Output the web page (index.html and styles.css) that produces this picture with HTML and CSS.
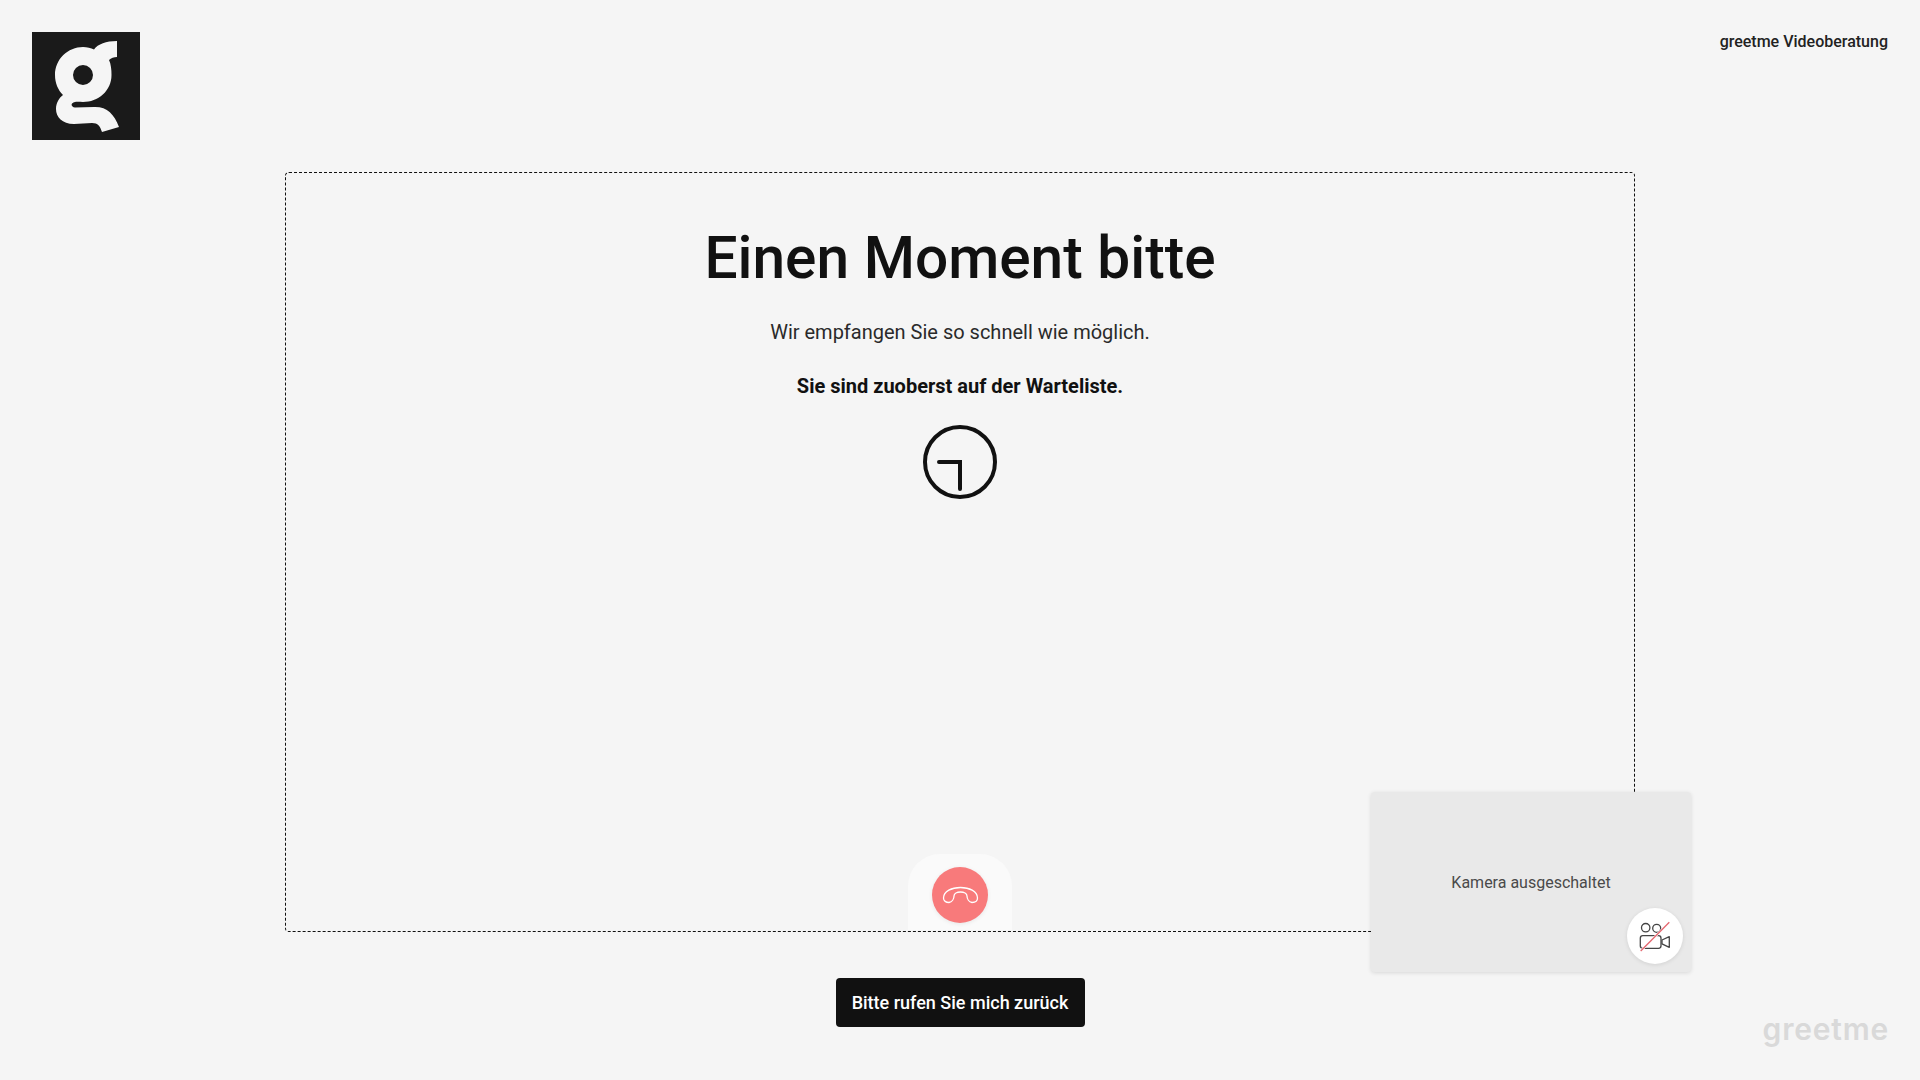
FILE: index.html
```html
<!DOCTYPE html>
<html lang="de">
<head>
	<meta charset="UTF-8">
	<meta name="viewport" content="width=device-width, initial-scale=1.0">
	<title>greetme Videoberatung</title>
	<link rel="stylesheet" href="styles.css">
</head>
<body>
	<header class="top">
		<svg class="logo" viewBox="0 0 108 108">
			<rect width="108" height="108" fill="#1a1a1a"/>
			<path fill="#f5f5f5" fill-rule="evenodd" d="M85 9V25C82 25 79 26 77 28C79 32 79.500 38 79.500 43C79.500 59 66 70 51 70C48 70 45 69.500 43 70C38 71 39 75 43 75.500L62 75C75 74.500 82 82 87 95L70 100C68 94 66 91 60 91L42 92C30 92 24 85 24 77C24 71 27 66 31 63C26 58 23 51 23 43C23 27 36 15 51 15C55 15 59 16 62 17.500C66 12 74 9 85 9ZM51 33A10 10 0 1 0 51 53A10 10 0 1 0 51 33Z"/>
		</svg>
		<span class="top-title">greetme Videoberatung</span>
	</header>

	<main class="stage">
		<h1>Einen Moment bitte</h1>
		<p class="lead">Wir empfangen Sie so schnell wie möglich.</p>
		<p class="queue">Sie sind zuoberst auf der Warteliste.</p>
		<svg class="clock" viewBox="0 0 74 74">
			<circle cx="37" cy="37" r="35" fill="none" stroke="#111" stroke-width="4"/>
			<path d="M16 37H37V64" fill="none" stroke="#111" stroke-width="4" stroke-linecap="round" stroke-linejoin="miter"/>
		</svg>

		<div class="hangup">
			<button class="hangup-btn" type="button" aria-label="Auflegen">
				<svg viewBox="0 0 37 18" width="37" height="18">
					<path d="M1.500 12C1.500 5 10 1.500 18.500 1.500C27 1.500 35.500 5 35.500 12C35.500 15 33 16.500 30 16.500C27 16 25 13 25 10C25 7.500 22 6 18.500 6C15 6 12 7.500 12 10C12 13 10 16 7 16.500C4 16.500 1.500 15 1.500 12Z" fill="none" stroke="#fff" stroke-width="1.300"/>
				</svg>
			</button>
		</div>
	</main>

	<div class="callback">
		<button class="callback-btn" type="button">Bitte rufen Sie mich zurück</button>
	</div>

	<aside class="selfview">
		<span class="selfview-text">Kamera ausgeschaltet</span>
		<button class="cam-btn" type="button" aria-label="Kamera">
			<svg viewBox="0 0 56 56" width="56" height="56">
				<g fill="none" stroke="#444" stroke-width="1.300" stroke-linejoin="round">
					<circle cx="18.700" cy="19.700" r="4.200"/>
					<circle cx="29.700" cy="20.300" r="4"/>
					<rect x="13.300" y="27.700" width="20.700" height="12.600" rx="2.500"/>
					<path d="M35 32L42.300 28.700V39.300L35 35.800Z"/>
				</g>
				<path d="M13.700 43L42.300 14.300" stroke="#fff" stroke-width="2.400"/>
				<path d="M13.700 43L42.300 14.300" stroke="#e4656e" stroke-width="1.300"/>
			</svg>
		</button>
	</aside>

	<div class="wordmark">greetme</div>
</body>
</html>
```

FILE: styles.css
```css
* {
	margin: 0;
	padding: 0;
	box-sizing: border-box;
}

html, body {
	height: 100%;
}

body {
	position: relative;
	overflow: hidden;
	background-color: #f5f5f5;
	color: #111111;
	font-family: Roboto, "Liberation Sans", sans-serif;
}

button {
	border: none;
	font-family: inherit;
	cursor: pointer;
}

/* header */
.top {
	display: flex;
	justify-content: space-between;
	align-items: flex-start;
	height: 172px;
	padding: 32px;
}

.logo {
	display: block;
	width: 108px;
	height: 108px;
}

.top-title {
	color: #222222;
	font-size: 16px;
	font-weight: 500;
	line-height: 19px;
}

/* waiting area */
.stage {
	position: relative;
	display: flex;
	flex-direction: column;
	align-items: center;
	width: 1350px;
	height: 760px;
	margin: 0 auto;
	padding-top: 46px;
	border: 1px dashed #111111;
	border-radius: 4px;
}

.stage h1 {
	font-size: 58.600px;
	font-weight: 500;
	line-height: 78px;
}

.lead {
	margin-top: 21px;
	color: #2a2a2a;
	font-size: 20px;
	line-height: 28px;
}

.queue {
	margin-top: 26px;
	font-size: 20px;
	font-weight: 700;
	line-height: 28px;
}

.clock {
	display: block;
	width: 74px;
	height: 74px;
	margin-top: 25px;
}

/* hang up */
.hangup {
	position: absolute;
	left: 50%;
	bottom: 1px;
	display: flex;
	justify-content: center;
	width: 104px;
	height: 76px;
	margin-left: -52px;
	padding-top: 13px;
	border-radius: 32px 32px 0 0;
	background-color: #fafafa;
}

.hangup-btn {
	display: flex;
	align-items: center;
	justify-content: center;
	width: 56px;
	height: 56px;
	border-radius: 50%;
	background-color: #f87a7b;
	box-shadow: 0 1px 4px rgba(0, 0, 0, .08);
}

/* call back */
.callback {
	display: flex;
	justify-content: center;
	margin-top: 46px;
}

.callback-btn {
	width: 249px;
	height: 49px;
	border-radius: 4px;
	background-color: #111111;
	color: #ffffff;
	font-size: 18px;
	font-weight: 500;
}

/* own camera */
.selfview {
	position: absolute;
	top: 792px;
	left: 1371px;
	display: flex;
	align-items: center;
	justify-content: center;
	width: 320px;
	height: 180px;
	border-radius: 4px;
	background-color: #e9e9e9;
	box-shadow: 0 1px 4px rgba(0, 0, 0, .12);
}

.selfview-text {
	color: #4a4a4a;
	font-size: 16px;
}

.cam-btn {
	position: absolute;
	right: 8px;
	bottom: 8px;
	display: block;
	width: 56px;
	height: 56px;
	border-radius: 50%;
	background-color: #ffffff;
	box-shadow: 0 1px 4px rgba(0, 0, 0, .1);
}

.cam-btn svg {
	display: block;
}

.wordmark {
	position: absolute;
	top: 1011px;
	right: 31px;
	color: #d9d9d9;
	font-family: Inter, sans-serif;
	font-size: 30px;
	font-weight: 600;
	line-height: 36px;
	letter-spacing: .800px;
}
```
